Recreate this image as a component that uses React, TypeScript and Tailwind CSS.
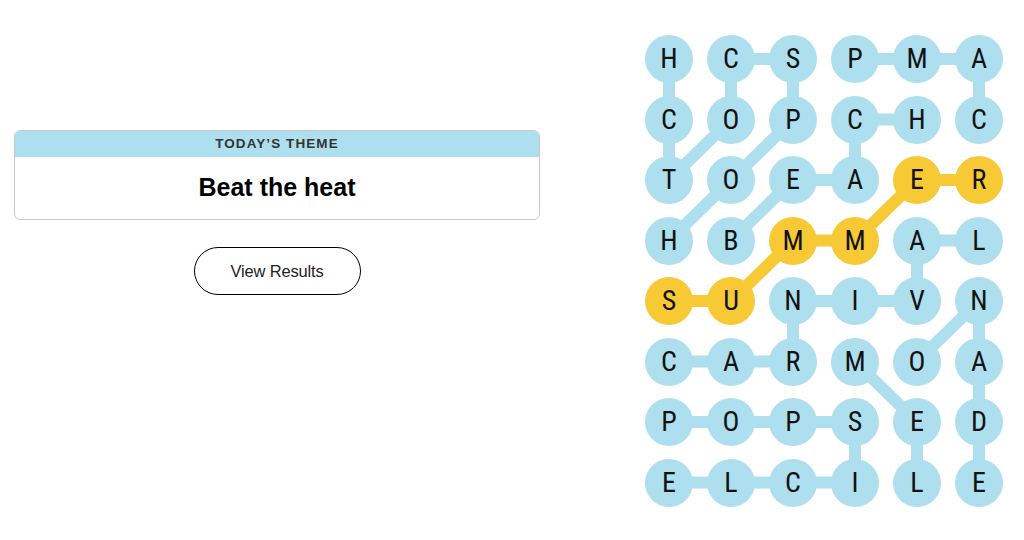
const LETTERS = [
  "HCSPMA",
  "COPCHC",
  "TOEAER",
  "HBMMAL",
  "SUNIVN",
  "CARMOA",
  "POPSED",
  "ELCILE",
];

// cells that belong to the spangram
const FOUND = new Set(["4,2", "5,2", "2,3", "3,3", "0,4", "1,4"]);

// [c1, r1, c2, r2, spangram?]
const LINKS: [number, number, number, number, boolean?][] = [
  [0, 0, 0, 1],
  [1, 0, 2, 0],
  [1, 0, 1, 1],
  [2, 0, 2, 1],
  [3, 0, 4, 0],
  [4, 0, 5, 0],
  [5, 0, 5, 1],
  [0, 1, 0, 2],
  [1, 1, 0, 2],
  [2, 1, 1, 2],
  [3, 1, 4, 1],
  [3, 1, 3, 2],
  [2, 2, 3, 2],
  [1, 2, 0, 3],
  [2, 2, 1, 3],
  [4, 3, 5, 3],
  [4, 3, 4, 4],
  [2, 4, 3, 4],
  [3, 4, 4, 4],
  [2, 4, 2, 5],
  [5, 4, 4, 5],
  [5, 4, 5, 5],
  [0, 5, 1, 5],
  [1, 5, 2, 5],
  [3, 5, 4, 6],
  [5, 5, 5, 6],
  [0, 6, 1, 6],
  [1, 6, 2, 6],
  [2, 6, 3, 6],
  [3, 6, 3, 7],
  [4, 6, 4, 7],
  [5, 6, 5, 7],
  [0, 7, 1, 7],
  [1, 7, 2, 7],
  [2, 7, 3, 7],
  [4, 2, 5, 2, true],
  [4, 2, 3, 3, true],
  [2, 3, 3, 3, true],
  [2, 3, 1, 4, true],
  [0, 4, 1, 4, true],
];

const cx = (c: number) => 24 + c * 62;
const cy = (r: number) => 24 + r * 60.5;

function Board() {
  return (
    <div className="relative">
      <svg className="absolute inset-0" width={358} height={472}>
        {LINKS.map(([c1, r1, c2, r2, gold], i) => (
          <line
            key={i}
            x1={cx(c1)}
            y1={cy(r1)}
            x2={cx(c2)}
            y2={cy(r2)}
            stroke={gold ? "#f7c934" : "#aedfee"}
            strokeWidth={12}
          />
        ))}
      </svg>
      <div className="relative grid grid-cols-[repeat(6,48px)] gap-x-[14px] gap-y-[12.5px]">
        {LETTERS.map((row, r) =>
          row.split("").map((ch, c) => (
            <div
              key={`${c},${r}`}
              className={`w-12 h-12 rounded-full flex items-center justify-center text-[28px] text-[#121212] font-['Liberation_Sans_Narrow','Roboto_Condensed',Roboto,sans-serif] ${
                FOUND.has(`${c},${r}`) ? "bg-[#f7c934]" : "bg-[#aedfee]"
              }`}
            >
              {ch}
            </div>
          ))
        )}
      </div>
    </div>
  );
}

export default function App() {
  return (
    <div className="w-[1024px] h-[540px] bg-white flex font-['Liberation_Sans',Arial,sans-serif]">
      {/* theme + results */}
      <div className="pl-[14px] pt-[130px] w-[540px] flex flex-col items-center">
        <div className="w-[526px] rounded-md border border-[#c9c9c9] overflow-hidden">
          <div className="h-[26px] bg-[#aedfee] flex items-center justify-center text-[13.5px] font-semibold tracking-[0.08em] text-[#333]">
            TODAY’S THEME
          </div>
          <div className="h-[62px] flex items-center justify-center text-[25px] font-bold text-black">
            Beat the heat
          </div>
        </div>
        <button className="mt-[27px] w-[167px] h-[48px] rounded-full border border-black text-[16.5px] text-[#222] bg-white tracking-[-0.01em]">
          View Results
        </button>
      </div>

      {/* letter board */}
      <div className="ml-[105px] pt-[35px]">
        <Board />
      </div>
    </div>
  );
}
